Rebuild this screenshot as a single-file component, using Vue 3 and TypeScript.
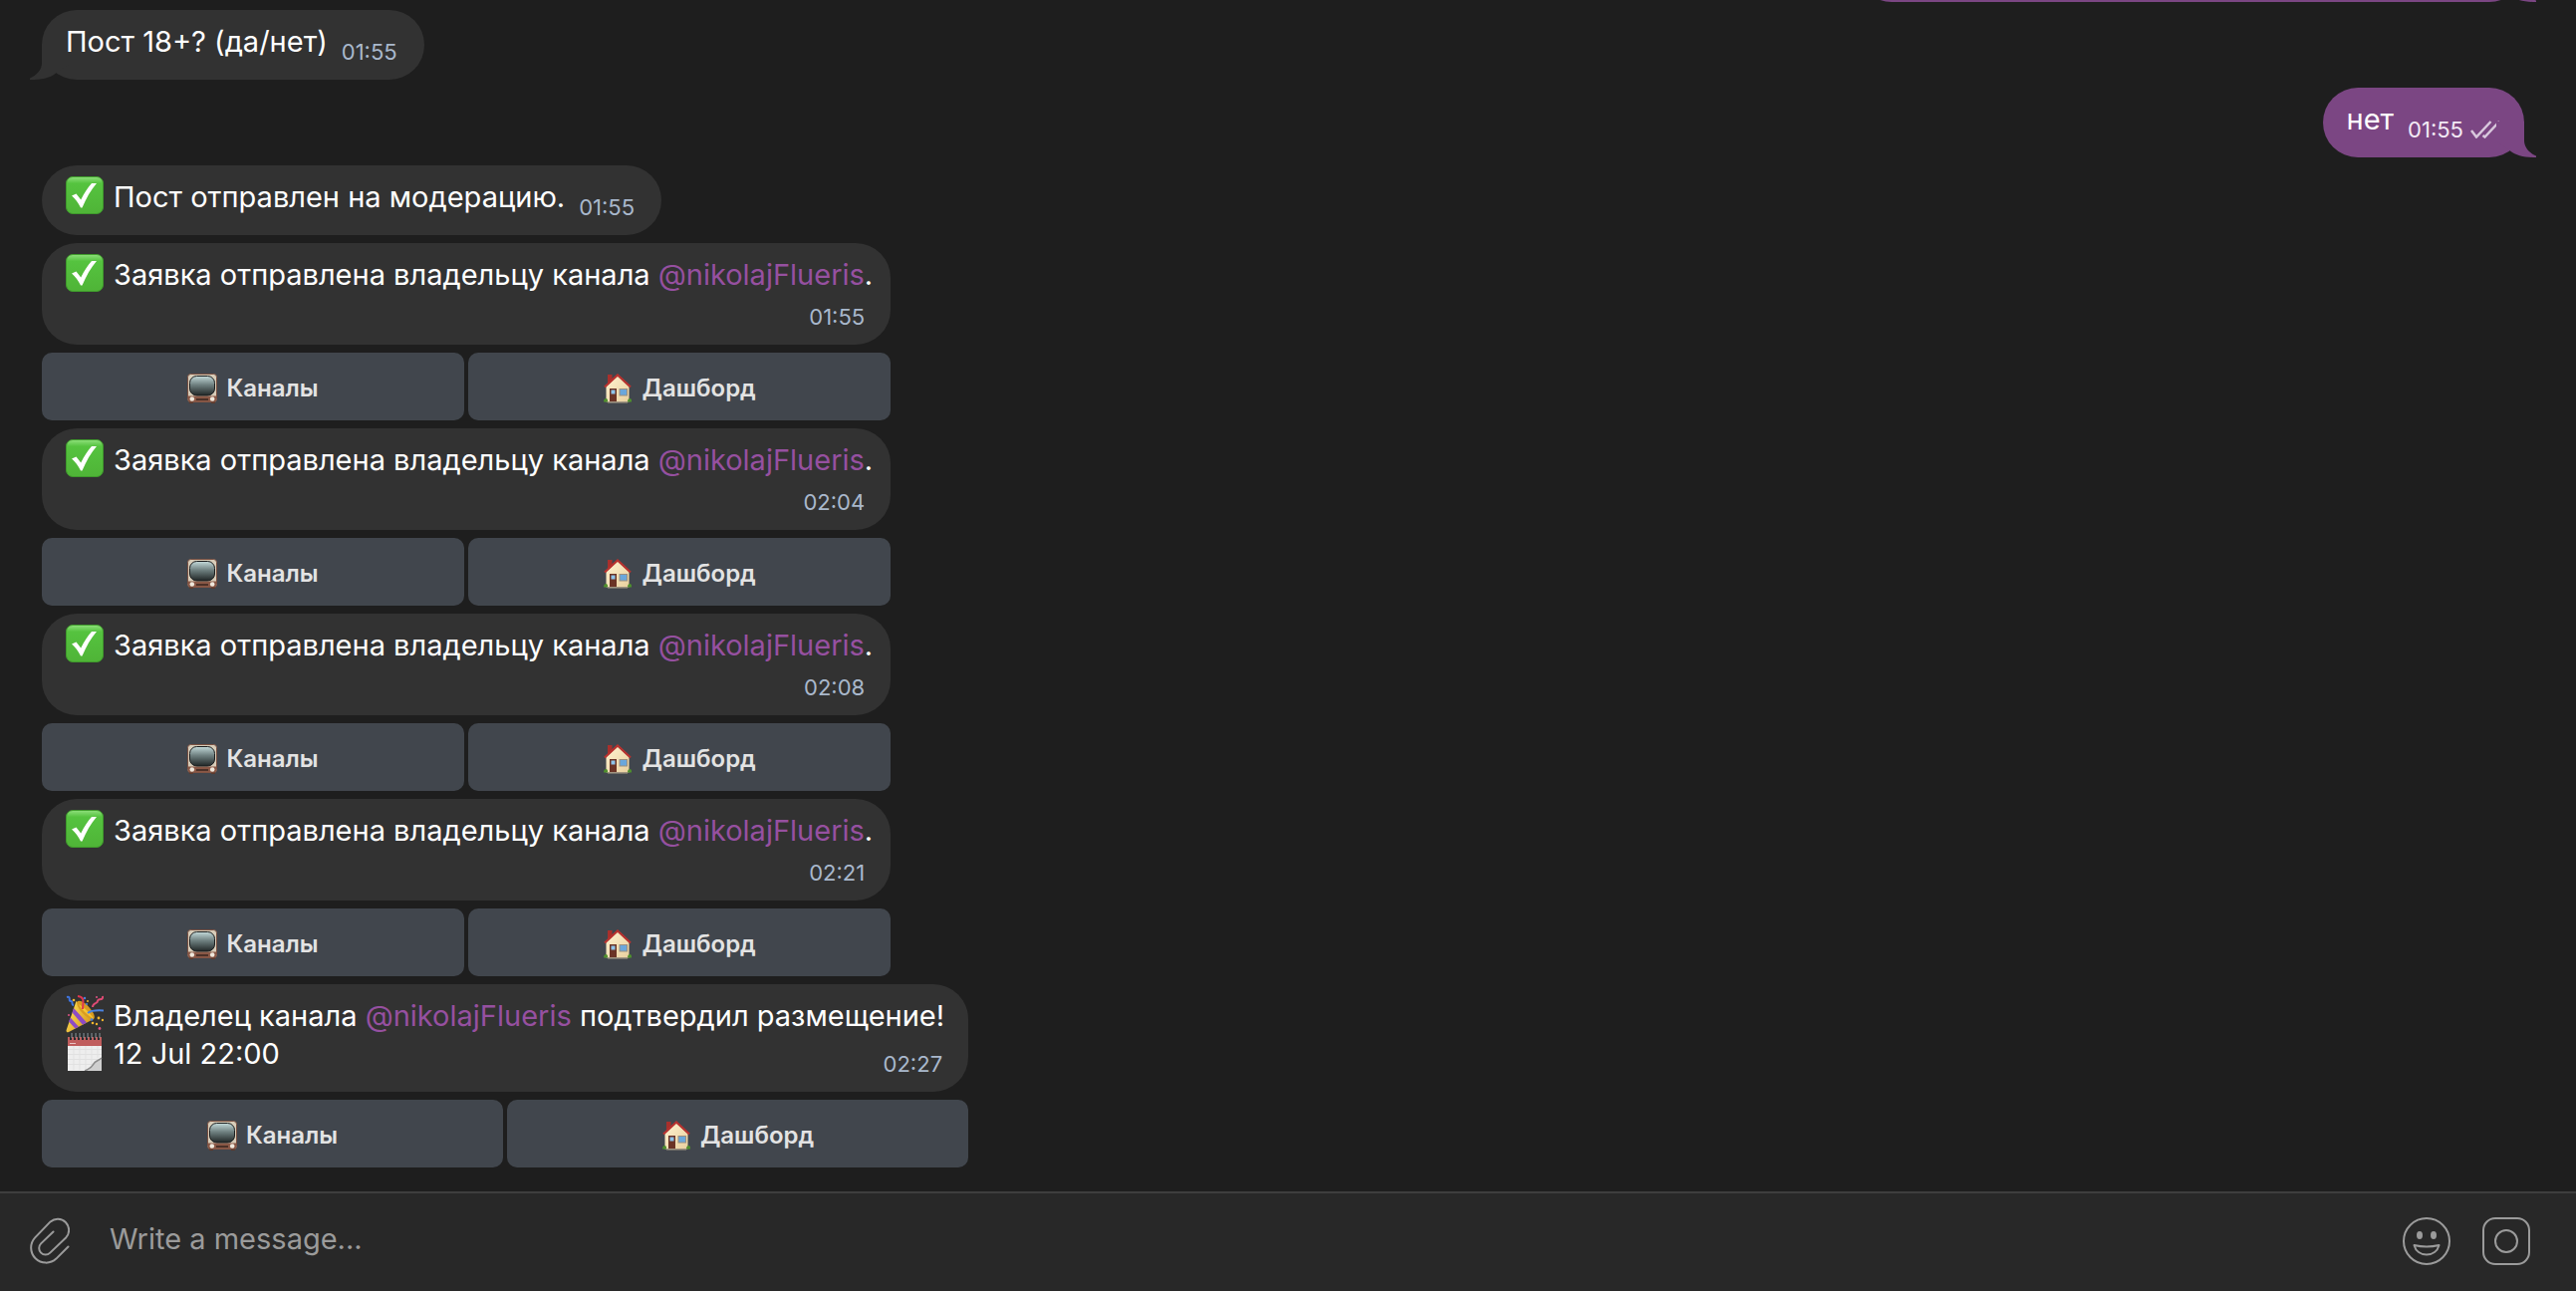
<script setup lang="ts">
import { ref } from 'vue'

type Emoji = 'check' | 'party' | 'calendar'
interface Line {
  emoji?: Emoji
  text: string
  mention?: string
  after?: string
}
interface Message {
  id: number
  out?: boolean
  tail?: boolean
  layout: 'inline' | 'stacked' | 'overlay'
  lines: Line[]
  time: string
  keyboard?: boolean
}

const request = (id: number, time: string): Message => ({
  id,
  layout: 'stacked',
  lines: [{ emoji: 'check', text: 'Заявка отправлена владельцу канала ', mention: '@nikolajFlueris', after: '.' }],
  time,
  keyboard: true,
})

const messages: Message[] = [
  { id: 1, layout: 'inline', tail: true, lines: [{ text: 'Пост 18+? (да/нет)' }], time: '01:55' },
  { id: 2, layout: 'inline', tail: true, out: true, lines: [{ text: 'нет' }], time: '01:55' },
  { id: 3, layout: 'inline', lines: [{ emoji: 'check', text: 'Пост отправлен на модерацию.' }], time: '01:55' },
  request(4, '01:55'),
  request(5, '02:04'),
  request(6, '02:08'),
  request(7, '02:21'),
  {
    id: 8,
    layout: 'overlay',
    lines: [
      { emoji: 'party', text: 'Владелец канала ', mention: '@nikolajFlueris', after: ' подтвердил размещение!' },
      { emoji: 'calendar', text: '12 Jul 22:00' },
    ],
    time: '02:27',
    keyboard: true,
  },
]

const draft = ref('')
</script>

<template>
  <div class="chat">
    <svg class="defs" aria-hidden="true">
      <defs>
        <linearGradient id="g-check" x1="0" y1="0" x2="0" y2="1">
          <stop offset="0" stop-color="#8fe07c" />
          <stop offset="0.18" stop-color="#55c33f" />
          <stop offset="1" stop-color="#4fb437" />
        </linearGradient>
        <linearGradient id="g-screen" x1="0" y1="0" x2="0" y2="1">
          <stop offset="0" stop-color="#c3dada" />
          <stop offset="0.45" stop-color="#6f8080" />
          <stop offset="1" stop-color="#202626" />
        </linearGradient>
        <linearGradient id="g-cone" x1="0" y1="0" x2="1" y2="0.6">
          <stop offset="0" stop-color="#ffe45c" />
          <stop offset="1" stop-color="#d99a1c" />
        </linearGradient>
        <linearGradient id="g-wall" x1="0" y1="0" x2="1" y2="1">
          <stop offset="0" stop-color="#fff3d0" />
          <stop offset="1" stop-color="#e8cf9e" />
        </linearGradient>
        <symbol id="e-check" viewBox="0 0 38 38">
          <rect x="0.5" y="0.5" width="37" height="37" rx="6.5" fill="url(#g-check)" stroke="#3f9a2c" />
          <path d="M6 19.5 L10.5 17.6 L15.2 23.6 C18.5 17 22 11.5 26 7 H31 C25 14 20.5 22 16.5 31.5 H15 C12.5 26.5 9.5 22.5 6 19.5 Z" fill="#fff" />
        </symbol>
        <symbol id="e-party" viewBox="0 0 38 38">
          <path d="M10.5 6 L28 24 L3 37 C1 38 0 36.5 0.8 34.5 Z" fill="url(#g-cone)" />
          <path d="M8 13 L21 27.5 L17 29.7 L6.5 17.5 Z M4.7 22.5 L13 31.8 L9.5 33.6 L3 26.5 Z" fill="#8d4bc4" />
          <ellipse cx="20" cy="15" rx="4.5" ry="12" transform="rotate(-43 20 15)" fill="#d99c22" />
          <path d="M13 9 C18 12 25 18 28 24 C22 20 16 15 13 9 Z" fill="#f6c634" />
          <path d="M12 1 C20 2 17 8 17 14" fill="none" stroke="#e0374f" stroke-width="2" />
          <path d="M22 18 C26 15 31 15 38 15.5" fill="none" stroke="#4a83e0" stroke-width="2" />
          <path d="M1 2 C6 1 2 6 5 6 C8 6 5 10 8 10" fill="none" stroke="#3f74dd" stroke-width="2" />
          <path d="M37 1 C38 6 32 3 32 6 C32 9 27 7 27 12" fill="none" stroke="#de4b74" stroke-width="2" />
          <g fill="#f0b52d"><circle cx="8" cy="5" r="1.3" /><circle cx="33" cy="23" r="1.4" /><circle cx="37" cy="25" r="1.2" /><circle cx="27" cy="28" r="1.3" /><circle cx="31" cy="29" r="1.2" /><circle cx="22" cy="6" r="1" /></g>
          <g fill="#e15386"><circle cx="34" cy="33.5" r="1.4" /><circle cx="3" cy="20" r="1" /><circle cx="31" cy="2" r="1" /></g>
          <g fill="#4a83e0"><circle cx="26" cy="24.5" r="1.3" /><circle cx="19" cy="3" r="1.2" /><circle cx="21" cy="9" r="1" /></g>
        </symbol>
        <symbol id="e-calendar" viewBox="0 0 38 38">
          <rect x="2" y="4" width="34" height="34" fill="#eeeeee" />
          <path d="M2 16.5 H36 M2 21.5 H36 M2 26.5 H36 M2 31.5 H36 M8 13 V37 M14 13 V37 M20 13 V37 M26 13 V37 M32 13 V25" stroke="#e1e1e1" />
          <rect x="2" y="4" width="34" height="9" fill="#c05d5d" />
          <path d="M4 10.5 H10" stroke="#e8c4c4" />
          <path d="M36 25 C33 27 29 29 28 31 C25 35 22 37 19 38 H36 Z" fill="#cfcfcf" />
          <path d="M36 25 C33 28 29 28 28 31 C25 36 22 37 19 38" fill="none" stroke="#8c8c8c" stroke-width="1.5" />
          <path d="M5 0 V7 M9 0 V7 M13 0 V7 M17 0 V7 M21 0 V7 M25 0 V7 M29 0 V7 M33 0 V7" stroke="#262b2e" stroke-width="2" />
          <path d="M6 0 V5 M10 0 V5 M14 0 V5 M18 0 V5 M22 0 V5 M26 0 V5 M30 0 V5 M34 0 V5" stroke="#8d979c" />
        </symbol>
        <symbol id="e-tv" viewBox="0 0 30 30">
          <rect x="0.5" y="0.5" width="29" height="28" rx="3" fill="#d8cdb9" stroke="#7a5142" />
          <rect x="2" y="28" width="4" height="2" fill="#5b3a2e" /><rect x="24" y="28" width="4" height="2" fill="#5b3a2e" />
          <path d="M1 22.5 H29 V27 Q29 28.5 27 28.5 H3 Q1 28.5 1 27 Z" fill="#8a5846" />
          <rect x="2.5" y="2.5" width="25" height="19.5" rx="7" fill="url(#g-screen)" stroke="#1d1f20" />
          <circle cx="4.8" cy="25.5" r="2.3" fill="#efe8dc" /><circle cx="25.2" cy="25.5" r="2.3" fill="#efe8dc" />
          <path d="M9 26 H21" stroke="#4c3128" stroke-width="2" />
        </symbol>
        <symbol id="e-house" viewBox="0 0 30 30">
          <rect x="5" y="1" width="4.5" height="9" fill="#a8302c" />
          <path d="M3.500 13 L15 2.500 L26.500 13 V28.500 H3.500 Z" fill="url(#g-wall)" />
          <path d="M2 13.5 L15 1.5 L28 13.5" fill="none" stroke="#b8322f" stroke-width="2.2" />
          <rect x="7" y="15" width="7" height="13" fill="#6b3426" />
          <rect x="8.5" y="16.5" width="4" height="4" fill="#8ec3ea" />
          <rect x="17" y="15.5" width="7.5" height="6.5" fill="#6aa7dc" stroke="#9c8f7e" />
          <path d="M1 28.5 Q1 24.5 4 25 Q5.5 26 5 28.5 Z M25 28.5 Q25 24.5 28 25 Q29.5 26 29 28.5 Z" fill="#4f8f2e" />
          <path d="M5 29 H25" stroke="#a89b88" />
        </symbol>
        <symbol id="s-tail" viewBox="0 0 40 36">
          <path d="M12 0 V19 C12 26 7 31.5 0 34.5 V36 C11 36 20 34.5 26 29.5 L40 20 V0 Z" fill="currentColor" />
        </symbol>
      </defs>
    </svg>

    <main class="feed">
      <div class="bubble out earlier">
        <svg class="tail"><use href="#s-tail" /></svg>
      </div>
      <article v-for="m in messages" :key="m.id" class="message" :class="{ own: m.out }">
        <div class="bubble" :class="[m.layout, { out: m.out }]">
          <svg v-if="m.tail" class="tail" aria-hidden="true"><use href="#s-tail" /></svg>
          <div class="text">
            <p v-for="(l, i) in m.lines" :key="i">
              <svg v-if="l.emoji" class="emoji" aria-hidden="true"><use :href="'#e-' + l.emoji" /></svg>
              <span>{{ l.text }}<a v-if="l.mention" href="#">{{ l.mention }}</a>{{ l.after }}</span>
            </p>
          </div>
          <div class="meta">
            <time>{{ m.time }}</time>
            <svg v-if="m.out" class="ticks" viewBox="0 0 30 18" aria-hidden="true">
              <path d="M1 10 L6 16.5 L20.5 1 M12.5 15 L14.5 16.5 L29 1" />
            </svg>
          </div>
        </div>
        <div v-if="m.keyboard" class="keyboard">
          <button type="button"><svg aria-hidden="true"><use href="#e-tv" /></svg>Каналы</button>
          <button type="button"><svg aria-hidden="true"><use href="#e-house" /></svg>Дашборд</button>
        </div>
      </article>
    </main>

    <form class="composer" @submit.prevent>
      <button type="button" aria-label="Attach">
        <svg class="clip" viewBox="0 0 40 48">
          <path d="M38.5 29.5 L26.4 41.6 A15 15 0 0 1 5.2 20.4 L20.6 4.4 A11.2 11.2 0 0 1 36.4 20.2 L20.3 35.6 A6.5 6.5 0 0 1 11.1 26.4 L23.5 14.5" />
        </svg>
      </button>
      <input v-model="draft" type="text" placeholder="Write a message..." aria-label="Write a message" />
      <button type="button" aria-label="Emoji">
        <svg viewBox="0 0 48 48">
          <circle cx="24" cy="24" r="23" />
          <ellipse class="solid" cx="17" cy="18" rx="3" ry="4" /><ellipse class="solid" cx="31" cy="18" rx="3" ry="4" />
          <path d="M11.5 28 Q24 31 36.5 28 C35 34 30 37.5 24 37.5 C18 37.5 13 34 11.5 28 Z" />
        </svg>
      </button>
      <button type="button" aria-label="Record video">
        <svg viewBox="0 0 48 48">
          <rect x="1" y="1" width="46" height="46" rx="12" />
          <circle cx="24" cy="24" r="11" />
        </svg>
      </button>
    </form>
  </div>
</template>

<style>
body {
  margin: 0;
  background: #1e1e1e;
}
</style>

<style scoped>
.chat {
  display: flex;
  flex-direction: column;
  height: 100vh;
  background: #1e1e1e;
  color: #fff;
  font-family: Inter, 'Noto Sans', sans-serif;
  font-size: 29px;
  line-height: 38px;
}
.defs {
  position: absolute;
  width: 0;
  height: 0;
}
.feed {
  flex: 1;
  min-height: 0;
  display: flex;
  flex-direction: column;
  justify-content: flex-end;
  gap: 8px;
  padding: 0 52px 24px 42px;
  overflow: hidden;
}
.message {
  flex: none;
  align-self: flex-start;
  display: flex;
  flex-direction: column;
  gap: 8px;
}
.own {
  align-self: flex-end;
}
.bubble {
  position: relative;
  display: flex;
  padding: 13px 24px 12px;
  border-radius: 35px;
  background: #323232;
  color: #323232;
}
.bubble.out {
  background: #7b4683;
  color: #7b4683;
}
.earlier {
  flex: none;
  align-self: flex-end;
  box-sizing: border-box;
  width: 670px;
  height: 70px;
}
.inline {
  align-items: flex-end;
  gap: 14px;
}
.stacked {
  flex-direction: column;
  padding-right: 18px;
}
.overlay {
  display: grid;
}
.overlay > .text,
.overlay > .meta {
  grid-area: 1 / 1;
}
.tail {
  position: absolute;
  left: -12px;
  bottom: 0;
  width: 40px;
  height: 36px;
}
.out .tail {
  left: auto;
  right: -12px;
  transform: scaleX(-1);
}
.text {
  position: relative;
  margin-bottom: 7px;
  color: #fff;
}
p {
  display: flex;
  gap: 10px;
  margin: 0;
  white-space: pre;
}
.emoji {
  flex: none;
  width: 38px;
  height: 38px;
  margin: -2px 0 2px;
}
a {
  color: #9650a0;
  text-decoration: none;
}
.meta {
  align-self: flex-end;
  justify-self: end;
  display: flex;
  align-items: center;
  gap: 7px;
  margin-right: 2px;
  color: #a9b8cc;
  font-size: 22px;
  line-height: 32px;
}
.inline .meta {
  margin-right: 3px;
}
.stacked .meta {
  margin-right: 8px;
}
.out .meta {
  margin-right: 0;
  color: #f3eaf5;
}
.ticks {
  width: 30px;
  height: 18px;
  fill: none;
  stroke: #d9c8dd;
  stroke-width: 2.5;
}
.bubble.out .meta {
  margin-right: 0;
}
.keyboard {
  display: grid;
  grid-template-columns: 1fr 1fr;
  gap: 4px;
}
.keyboard button {
  display: flex;
  align-items: center;
  justify-content: center;
  gap: 9px;
  height: 68px;
  padding: 3px 0 0;
  border: 0;
  border-radius: 10px;
  background: #41464d;
  color: #e3e3e3;
  font: 600 24px/32px Inter, 'Noto Sans', sans-serif;
}
.keyboard svg {
  width: 30px;
  height: 30px;
}
.composer {
  flex: none;
  display: flex;
  align-items: center;
  gap: 32px;
  height: 96px;
  padding: 0 46px 2px 30px;
  border-top: 2px solid #3e3e3e;
  background: #282828;
}
.composer button {
  display: flex;
  padding: 0;
  border: 0;
  background: none;
}
.composer svg {
  width: 48px;
  height: 48px;
  fill: none;
  stroke: #9b9b9b;
  stroke-width: 2;
  stroke-linecap: round;
  stroke-linejoin: round;
}
.composer .clip {
  width: 40px;
}
.composer .solid {
  fill: #9b9b9b;
  stroke: none;
}
input {
  flex: 1;
  min-width: 0;
  padding: 0 0 4px 8px;
  border: 0;
  outline: 0;
  background: none;
  color: #fff;
  font: inherit;
}
input::placeholder {
  color: #9b9b9b;
  opacity: 1;
}
</style>
